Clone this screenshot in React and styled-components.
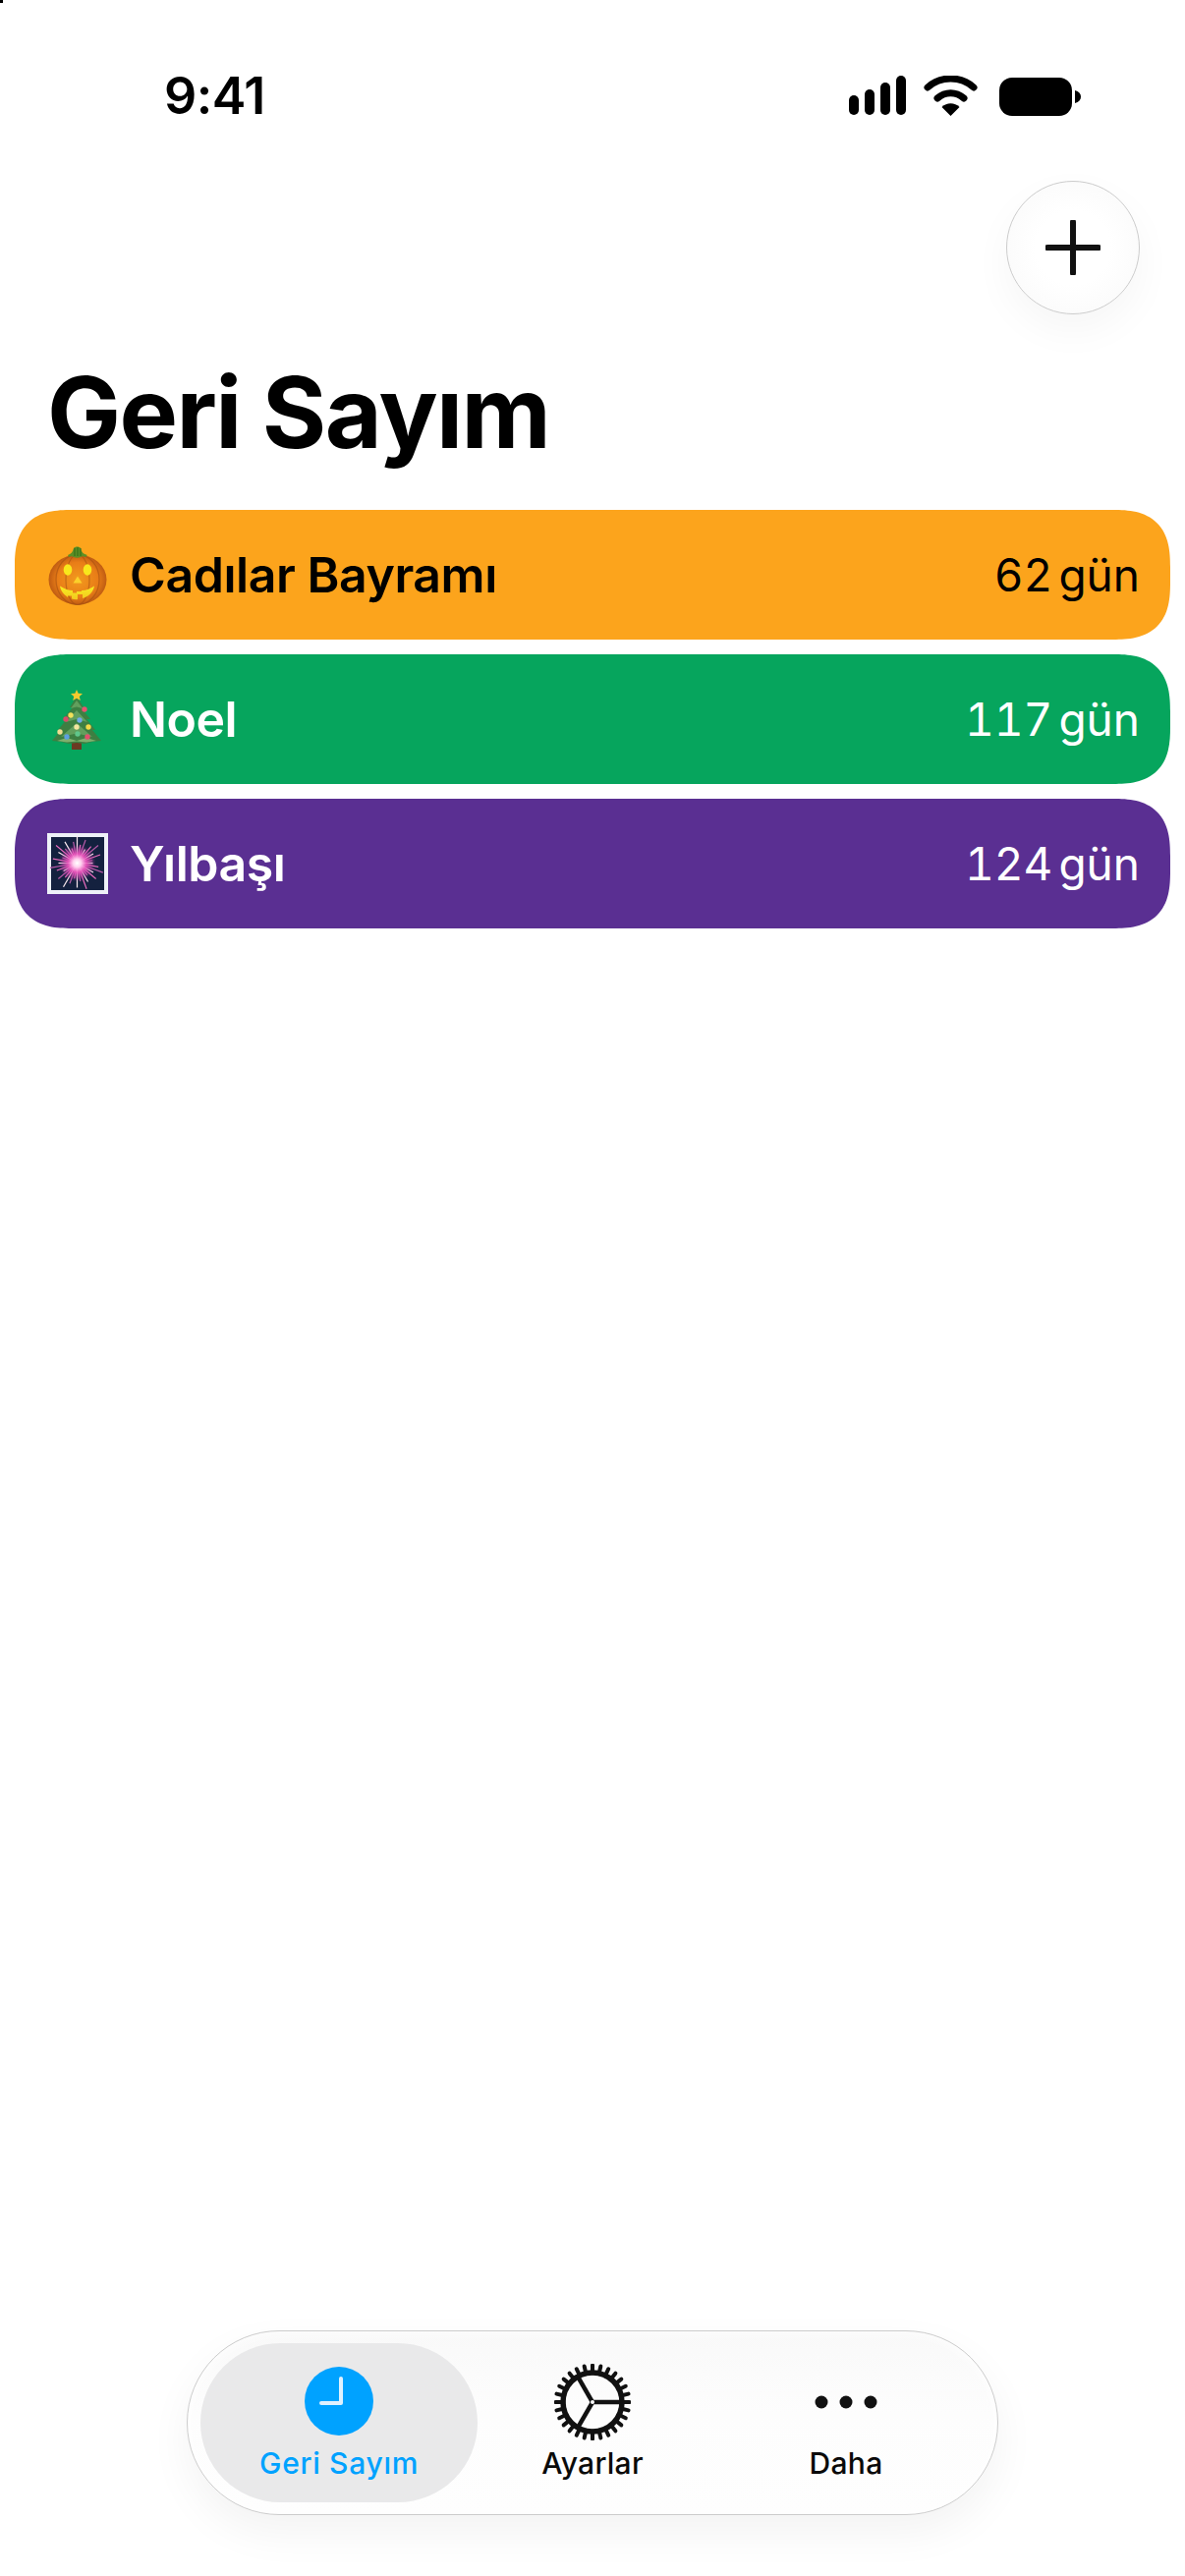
import React from "react";
import styled, { createGlobalStyle } from "styled-components";

const Global = createGlobalStyle`
  html, body { margin: 0; padding: 0; background: #fff; }
  * { box-sizing: border-box; }
  #root { width: 1206px; height: 2622px; overflow: hidden; }
`;

const Page = styled.div`
  position: relative;
  width: 1206px;
  height: 2622px;
  display: flex;
  flex-direction: column;
  background: #fff;
  font-family: Inter, "Liberation Sans", sans-serif;
  color: #000;
`;

const CornerMark = styled.div`
  position: absolute;
  top: 0;
  left: 0;
  width: 3px;
  height: 3px;
  background: #000;
`;

const StatusBar = styled.div`
  height: 184px;
  padding: 71px 106px 0 167px;
  display: flex;
  justify-content: space-between;
  align-items: flex-start;
`;

const Time = styled.div`
  font-size: 52px;
  line-height: 54px;
  font-weight: 600;
  letter-spacing: -0.5px;
`;

const StatusIcons = styled.svg`
  display: block;
  margin-top: 6px;
`;

const TopBar = styled.div`
  display: flex;
  justify-content: flex-end;
  padding-right: 46px;
`;

const RoundButton = styled.div`
  width: 136px;
  height: 136px;
  border-radius: 50%;
  display: flex;
  align-items: center;
  justify-content: center;
  background: radial-gradient(circle at 50% 50%, #ffffff 40%, #f8f8f8 100%);
  border: 1.5px solid #cccccc;
  box-shadow: 0 16px 40px rgba(0, 0, 0, 0.04);
`;

const Title = styled.h1`
  margin: 44px 0 0 48px;
  font-size: 100px;
  line-height: 112px;
  font-weight: 700;
  letter-spacing: -1.6px;
`;

const List = styled.div`
  margin-top: 43px;
  padding: 0 15px;
  display: flex;
  flex-direction: column;
  gap: 15px;
`;

const Row = styled.div`
  height: 132px;
  padding: 0 31px 0 33px;
  display: flex;
  align-items: center;
  gap: 22px;
  border-radius: 48px;
  background: ${(p) => p.$bg};
  color: ${(p) => p.$fg};
  @supports (corner-shape: superellipse(1.4)) {
    border-radius: 58px;
    corner-shape: superellipse(1.4);
  }
`;

const Emoji = styled.svg`
  display: block;
  width: 62px;
  height: 62px;
  flex: none;
`;

const Name = styled.div`
  flex: 1;
  font-size: 50px;
  font-weight: 600;
  letter-spacing: -0.45px;
  line-height: 60px;
`;

const Days = styled.div`
  display: flex;
  gap: 6px;
  font-size: 46px;
  font-weight: 400;
  line-height: 60px;
  font-variant-numeric: tabular-nums;
`;

const Spacer = styled.div`
  flex: 1;
`;

const NavWrap = styled.div`
  display: flex;
  justify-content: center;
  padding-bottom: 62px;
`;

const Nav = styled.div`
  width: 826px;
  height: 188px;
  padding: 12px 12px 12px 13px;
  border-radius: 94px;
  display: grid;
  grid-template-columns: 282px 234px 282px;
  background: linear-gradient(180deg, #f9f9f9 0%, #fdfdfd 45%, #fefefe 100%);
  border: 1.5px solid #cccccc;
  box-shadow: 0 18px 44px rgba(0, 0, 0, 0.05), inset 0 0 14px rgba(255, 255, 255, 1);
`;

const Tab = styled.div`
  display: flex;
  flex-direction: column;
  align-items: center;
  border-radius: 81px;
  padding-top: ${(p) => (p.$active ? "24px" : "21px")};
  background: ${(p) => (p.$active ? "#e9e9ea" : "transparent")};
  color: ${(p) => (p.$active ? "#00a2ff" : "#0a0a0a")};
`;

const TabIcon = styled.svg`
  display: block;
  flex: none;
`;

const TabLabel = styled.div`
  font-size: 30px;
  line-height: 36px;
  font-weight: 500;
  letter-spacing: ${(p) => (p.$wide ? "0.7px" : "0.3px")};
  margin-top: ${(p) => p.$mt}px;
`;

const Pumpkin = () => (
  <Emoji viewBox="0 0 62 62">
    <defs>
      <radialGradient id="pk" cx="50%" cy="50%" r="58%">
        <stop offset="0" stopColor="#f29a1e" />
        <stop offset="0.6" stopColor="#e97d17" />
        <stop offset="1" stopColor="#a94a10" />
      </radialGradient>
      <linearGradient id="mouth" x1="0" y1="0" x2="0" y2="1">
        <stop offset="0" stopColor="#f7ee22" />
        <stop offset="1" stopColor="#f2c81e" />
      </linearGradient>
    </defs>
    <ellipse cx="31" cy="36" rx="29.500" ry="25.500" fill="url(#pk)" />
    <g fill="none" stroke="#9c4a10" strokeOpacity=".5" strokeWidth="1.2">
      <ellipse cx="31" cy="36" rx="22" ry="25.500" />
      <ellipse cx="31" cy="36" rx="12" ry="25.500" />
    </g>
    <path d="M21 11c3-1 5-3 6-7 1-2 6-2 7 0 1 4 3 6 7 7l-2 2c-2-1-4-1-5 0-2 1-5 1-7 0-1-1-3-1-5 0z" fill="#5d8f25" />
    <path d="M28 4v8M31 3v9M34 4v8" stroke="#2f6a18" strokeWidth="1" />
    <ellipse cx="21" cy="26" rx="4.300" ry="5.800" fill="#f8e71c" />
    <ellipse cx="41" cy="26" rx="4.300" ry="5.800" fill="#f8e71c" />
    <path d="M31 32.500l4.500 7h-9z" fill="#fbd02a" />
    <path d="M13 42.500c5 3 9 4.500 13 4.500v2.500h4V48h5v-1c5 0 9-2 13-4.500-1 6-6 11-12 12.500v-4h-5v5c-2 .5-4 0-6-.5v-3h-4v1.500c-4-3-7-6-8-11.500z" fill="url(#mouth)" />
  </Emoji>
);

const Tree = () => {
  const balls = [
    [38, 21, "#e8536f"], [24, 27, "#f2e05a"], [19, 31, "#d94c6a"], [33, 32, "#6fa8e8"],
    [30, 39, "#f4e6a0"], [42, 39, "#f2d949"], [13, 44, "#f0dc90"], [31, 46, "#5fc68a"],
    [20, 49, "#5d9fe0"], [41, 49, "#e2506c"],
  ];
  return (
    <Emoji viewBox="0 0 62 62">
      <rect x="25" y="52" width="10" height="10" fill="#6b3a22" />
      <polygon points="30,8 37,19 34,19 44,31 40,31 49,42 46,42 55,53 46,54 38,56 30,55 22,56 14,54 5,53 14,42 11,42 20,31 16,31 26,19 23,19" fill="#3d7f42" />
      <path d="M30 12l-6 8 6-1.500 6 1.500zM30 22l-11 12 11-3 11 3zM30 35l-16 14 16-3.500 16 3.500z" fill="#629f5d" />
      <path d="M10 53l10-3 10 3 10-3 10 3-10 1.500-10-1-10 1z" fill="#7fb06e" />
      {balls.map(([x, y, c]) => (
        <circle key={`${x}-${y}`} cx={x} cy={y} r="2.700" fill={c} />
      ))}
      <path d="M30 1l1.700 3.700 4.300.4-3.200 2.800 1 4.100-3.800-2.200-3.800 2.200 1-4.100-3.200-2.800 4.300-.4z" fill="#f5ca2e" />
    </Emoji>
  );
};

const Fireworks = () => {
  const rays = Array.from({ length: 36 }, (_, i) => {
    const a = (i / 36) * Math.PI * 2;
    const len = 16 + ((i * 7) % 5) * 3;
    return {
      x: 30.500 + Math.cos(a) * len,
      y: 30.500 + Math.sin(a) * len,
      c: i % 3 === 0 ? "#fbeaf0" : i % 3 === 1 ? "#e86bbd" : "#b65aa8",
    };
  });
  return (
    <Emoji viewBox="0 0 62 62">
      <defs>
        <radialGradient id="fwg" cx="50%" cy="50%" r="50%">
          <stop offset="0" stopColor="#ffffff" />
          <stop offset="0.22" stopColor="#ffd0ee" />
          <stop offset="0.5" stopColor="#ee52bd" stopOpacity=".85" />
          <stop offset="1" stopColor="#b53aa6" stopOpacity="0" />
        </radialGradient>
      </defs>
      <rect width="62" height="62" fill="#eef1f8" />
      <rect x="4" y="4" width="54" height="54" fill="#14213f" />
      {rays.map((r, i) => (
        <line key={i} x1="30.500" y1="30.500" x2={r.x} y2={r.y} stroke={r.c} strokeWidth="1.200" />
      ))}
      <circle cx="30.500" cy="30.500" r="19" fill="url(#fwg)" />
    </Emoji>
  );
};

const Gear = () => {
  const teeth = 28;
  const ticks = Array.from({ length: teeth }, (_, i) => (i * 360) / teeth);
  const spokes = [0, 120, 240];
  return (
    <TabIcon width="78" height="78" viewBox="0 0 78 78" fill="none">
      {ticks.map((a) => (
        <path key={a} d="M39 1.500v8" stroke="#111" strokeWidth="4" strokeLinecap="round" transform={`rotate(${a} 39 39)`} />
      ))}
      <circle cx="39" cy="39" r="30" stroke="#111" strokeWidth="5.500" />
      {spokes.map((a) => (
        <path key={a} d="M39 39h29" stroke="#111" strokeWidth="4.500" transform={`rotate(${a} 39 39)`} />
      ))}
      <circle cx="39" cy="39" r="2" fill="#fff" />
    </TabIcon>
  );
};

export default function App() {
  const rows = [
    { name: "Cadılar Bayramı", days: "62", bg: "#fca41c", fg: "#000", icon: <Pumpkin /> },
    { name: "Noel", days: "117", bg: "#06a55d", fg: "#fff", icon: <Tree /> },
    { name: "Yılbaşı", days: "124", bg: "#5a2f92", fg: "#fff", icon: <Fireworks /> },
  ];
  return (
    <Page>
      <Global />
      <CornerMark />
      <StatusBar>
        <Time>9:41</Time>
        <StatusIcons width="236" height="42" viewBox="0 0 236 42">
          <rect x="0" y="20" width="10" height="20" rx="5" />
          <rect x="16" y="14" width="10" height="26" rx="5" />
          <rect x="32" y="7" width="10" height="33" rx="5" />
          <rect x="48" y="0" width="10" height="40" rx="5" />
          <path d="M80 12C93 0 114 0 127 12" fill="none" stroke="#000" strokeWidth="7" strokeLinecap="round" />
          <path d="M90 23c8-7 19-7 27 0" fill="none" stroke="#000" strokeWidth="7" strokeLinecap="round" />
          <path d="M103.500 41l-9-9c5-5 13-5 18 0z" />
          <rect x="153" y="2" width="74" height="39" rx="13" />
          <path d="M230 15c4 1 6 3.500 6 6.500s-2 5.500-6 6.500z" />
        </StatusIcons>
      </StatusBar>
      <TopBar>
        <RoundButton>
          <svg width="56" height="56" viewBox="0 0 56 56">
            <path d="M28 2v52M2 28h52" stroke="#111" strokeWidth="6" strokeLinecap="round" />
          </svg>
        </RoundButton>
      </TopBar>
      <Title>Geri Sayım</Title>
      <List>
        {rows.map((r) => (
          <Row key={r.name} $bg={r.bg} $fg={r.fg}>
            {r.icon}
            <Name>{r.name}</Name>
            <Days>
              <span>{r.days}</span>
              <span>gün</span>
            </Days>
          </Row>
        ))}
      </List>
      <Spacer />
      <NavWrap>
        <Nav>
          <Tab $active>
            <TabIcon width="70" height="70" viewBox="0 0 70 70">
              <circle cx="35" cy="35" r="35" fill="#00a2ff" />
              <path d="M37 12v25H17" fill="none" stroke="#dff1ff" strokeWidth="4" strokeLinecap="round" strokeLinejoin="round" />
            </TabIcon>
            <TabLabel $mt={10} $wide>Geri Sayım</TabLabel>
          </Tab>
          <Tab>
            <Gear />
            <TabLabel $mt={5}>Ayarlar</TabLabel>
          </Tab>
          <Tab>
            <TabIcon width="64" height="78" viewBox="0 0 64 78">
              <circle cx="7" cy="39" r="6.500" fill="#111" />
              <circle cx="32" cy="39" r="6.500" fill="#111" />
              <circle cx="57" cy="39" r="6.500" fill="#111" />
            </TabIcon>
            <TabLabel $mt={5}>Daha</TabLabel>
          </Tab>
        </Nav>
      </NavWrap>
    </Page>
  );
}
